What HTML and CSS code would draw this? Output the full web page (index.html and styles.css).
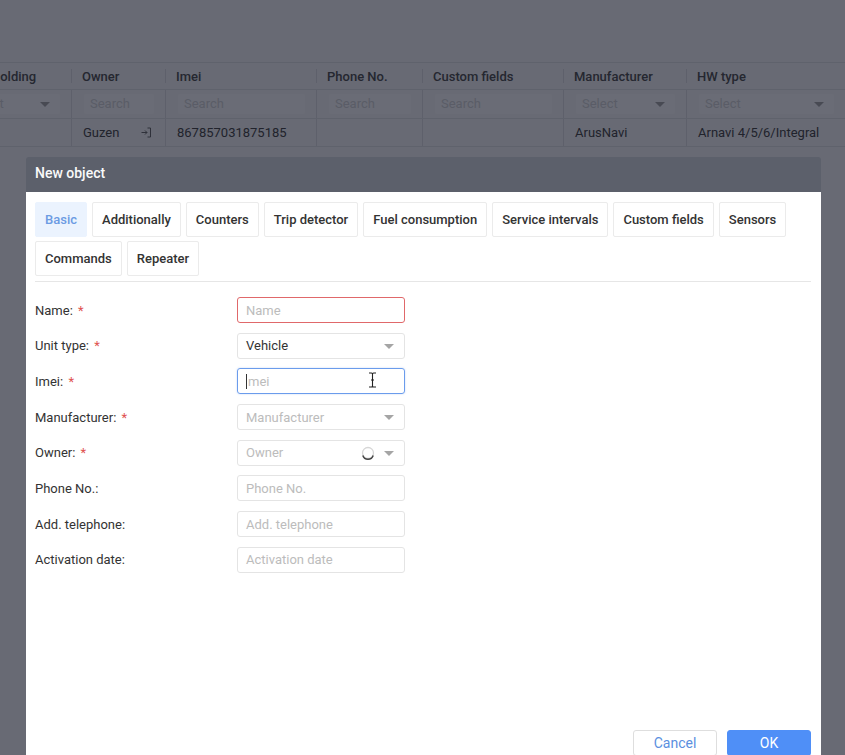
FILE: index.html
```html
<!DOCTYPE html>
<html lang="en">
<head>
  <meta charset="UTF-8" />
  <title>New object</title>
  <link rel="stylesheet" href="styles.css">
</head>
<body>

  <!-- table under the dialog -->
  <div class="page">
    <div class="toolbar"></div>
    <div class="grid">
      <div class="grid-row grid-head">
        <div class="cell">Holding</div>
        <div class="cell">Owner</div>
        <div class="cell">Imei</div>
        <div class="cell">Phone No.</div>
        <div class="cell">Custom fields</div>
        <div class="cell">Manufacturer</div>
        <div class="cell">HW type</div>
      </div>
      <div class="grid-row grid-filter">
        <div class="cell"><div class="filter filter-first">Select<span class="caret"></span></div></div>
        <div class="cell"><div class="filter">Search</div></div>
        <div class="cell"><div class="filter">Search</div></div>
        <div class="cell"><div class="filter">Search</div></div>
        <div class="cell"><div class="filter">Search</div></div>
        <div class="cell"><div class="filter">Select<span class="caret"></span></div></div>
        <div class="cell"><div class="filter">Select<span class="caret"></span></div></div>
      </div>
      <div class="grid-row grid-data">
        <div class="cell"></div>
        <div class="cell owner-cell">Guzen
          <svg class="login-icon" width="10" height="11" viewBox="0 0 10 11">
            <path d="M0.5 5.5h5.5M4 3.5l2 2-2 2M6.5 1h3v9h-3" fill="none" stroke="#666" stroke-width="1"/>
          </svg>
        </div>
        <div class="cell">867857031875185</div>
        <div class="cell"></div>
        <div class="cell"></div>
        <div class="cell">ArusNavi</div>
        <div class="cell">Arnavi 4/5/6/Integral</div>
      </div>
    </div>
  </div>

  <div class="overlay"></div>

  <!-- dialog -->
  <div class="modal">
    <div class="modal-head">New object</div>
    <div class="modal-body">
      <div class="tabs">
        <div class="tab active">Basic</div>
        <div class="tab">Additionally</div>
        <div class="tab">Counters</div>
        <div class="tab">Trip detector</div>
        <div class="tab">Fuel consumption</div>
        <div class="tab">Service intervals</div>
        <div class="tab">Custom fields</div>
        <div class="tab">Sensors</div>
        <div class="tab">Commands</div>
        <div class="tab">Repeater</div>
      </div>

      <div class="form">
        <div class="form-row">
          <label>Name: <span class="req">*</span></label>
          <div class="field invalid"><span class="ph">Name</span></div>
        </div>
        <div class="form-row">
          <label>Unit type: <span class="req">*</span></label>
          <div class="field"><span class="val">Vehicle</span><span class="caret"></span></div>
        </div>
        <div class="form-row">
          <label>Imei: <span class="req">*</span></label>
          <div class="field focused"><span class="text-cursor"></span><span class="ph">mei</span>
            <svg class="ibeam" width="9" height="16" viewBox="0 0 9 16">
              <path d="M1 1h2.5c0.6 0 1 0.4 1 1v12c0 0.6 0.4 1 1 1H8M8 1H5.5c-0.6 0-1 0.4-1 1M4.5 14c0 0.6-0.4 1-1 1H1M3 8h3" fill="none" stroke="#222" stroke-width="1.1"/>
            </svg>
          </div>
        </div>
        <div class="form-row">
          <label>Manufacturer: <span class="req">*</span></label>
          <div class="field"><span class="ph">Manufacturer</span><span class="caret"></span></div>
        </div>
        <div class="form-row">
          <label>Owner: <span class="req">*</span></label>
          <div class="field"><span class="ph">Owner</span>
            <svg class="spinner" width="14" height="14" viewBox="0 0 14 14">
              <circle cx="7" cy="7" r="5.5" fill="none" stroke="#d6d6d6" stroke-width="1.3"/>
              <path d="M1.8 9.5A5.5 5.5 0 0 0 12.2 9.5" fill="none" stroke="#444" stroke-width="1.5"/>
            </svg>
            <span class="caret"></span>
          </div>
        </div>
        <div class="form-row">
          <label>Phone No.:</label>
          <div class="field"><span class="ph">Phone No.</span></div>
        </div>
        <div class="form-row">
          <label>Add. telephone:</label>
          <div class="field"><span class="ph">Add. telephone</span></div>
        </div>
        <div class="form-row">
          <label>Activation date:</label>
          <div class="field"><span class="ph">Activation date</span></div>
        </div>
      </div>

      <div class="modal-foot">
        <button class="btn btn-cancel">Cancel</button>
        <button class="btn btn-ok">OK</button>
      </div>
    </div>
  </div>

</body>
</html>
```

FILE: styles.css
```css
body {
  margin: 0;
  font-family: Roboto, 'Liberation Sans', sans-serif;
  font-size: 13px;
  color: #333;
  background: #f4f5f7;
  overflow: hidden;
  height: 755px;
}

.toolbar {
  height: 62px;
}

/* table */
.grid {
  margin-left: -20px;
  border-top: 1px solid #dfe0e3;
}

.grid-row {
  display: grid;
  grid-template-columns: 91px 94px 151px 106px 141px 123px 1fr;
  border-bottom: 1px solid #dfe0e3;
}

.cell {
  position: relative;
  display: flex;
  align-items: center;
  padding: 0 11px;
  white-space: nowrap;
  overflow: hidden;
}

.grid-head {
  height: 26px;
}

.grid-head .cell {
  color: #4e4e4e;
  font-weight: 500;
}

.grid-head .cell + .cell::before {
  content: "";
  position: absolute;
  left: 0;
  top: 6px;
  bottom: 6px;
  border-left: 1px solid #dcdde0;
}

.grid-filter {
  height: 28px;
}

.grid-filter .cell {
  padding: 0 11px 0 12px;
  border-left: 1px solid #dcdde0;
}

.grid-filter .cell:first-child {
  border-left: none;
}

.filter {
  position: relative;
  flex: 1;
  height: 20px;
  line-height: 20px;
  padding: 0 6px;
  background: #fbfbfc;
  border-radius: 2px;
  color: #d2d3d6;
}

.filter-first {
  margin-left: -30px;
}

.grid-data {
  height: 27px;
}

.grid-data .cell {
  color: #444;
}

.grid-data .cell + .cell {
  border-left: 1px solid #dcdde0;
}

.owner-cell {
  justify-content: space-between;
  padding-right: 14px;
}

.caret {
  position: absolute;
  right: 10px;
  top: 50%;
  margin-top: -2px;
  border-left: 5px solid transparent;
  border-right: 5px solid transparent;
  border-top: 5px solid #a5a5a5;
}

.overlay {
  position: fixed;
  inset: 0;
  background: rgba(10, 14, 28, 0.6);
}

/* dialog */
.modal {
  position: absolute;
  left: 26px;
  top: 157px;
  width: 795px;
}

.modal-head {
  height: 35px;
  line-height: 33px;
  padding: 0 9px;
  background: #5c606b;
  border-radius: 3px 3px 0 0;
  color: #fafafa;
  font-size: 14px;
  font-weight: 500;
}

.modal-body {
  display: flex;
  flex-direction: column;
  height: 574px;
  padding: 10px 10px 10px 9px;
  background: #fff;
  box-sizing: border-box;
}

.tabs {
  display: flex;
  flex-wrap: wrap;
  gap: 4px 5px;
  padding-bottom: 5px;
  border-bottom: 1px solid #e6e6e6;
}

.tab {
  height: 35px;
  line-height: 33px;
  padding: 0 9px;
  border: 1px solid #ebebeb;
  border-radius: 2px;
  box-sizing: border-box;
  font-weight: 500;
  color: #333;
}

.tab.active {
  background: #ebf3fe;
  border-color: #ebf3fe;
  color: #6c9be3;
}

.form {
  flex: 1;
  display: flex;
  flex-direction: column;
  gap: 9.7px;
  padding-top: 15px;
}

.form-row {
  display: flex;
  align-items: center;
}

.form-row label {
  width: 202px;
  color: #333;
}

.req {
  color: #e0524f;
  margin-left: 2px;
}

.field {
  position: relative;
  display: flex;
  align-items: center;
  width: 168px;
  height: 26px;
  padding: 0 8px;
  border: 1px solid #e4e4e4;
  border-radius: 3px;
  box-sizing: border-box;
}

.field.invalid {
  border-color: #e0686a;
}

.field.focused {
  border-color: #6b9cec;
  box-shadow: 0 0 2px rgba(107, 156, 236, 0.4);
}

.ph {
  color: #bcbcbc;
}

.val {
  color: #333;
}

.text-cursor {
  width: 1px;
  height: 15px;
  background: #333;
  margin-right: 1px;
}

.ibeam {
  position: absolute;
  left: 130px;
  top: 3px;
}

.spinner {
  position: absolute;
  right: 29px;
  top: 5px;
}

.modal-foot {
  display: flex;
  justify-content: flex-end;
  gap: 10px;
}

.btn {
  width: 84px;
  height: 26px;
  font-family: Roboto, 'Liberation Sans', sans-serif;
  font-size: 14px;
  border-radius: 3px;
  cursor: pointer;
}

.btn-cancel {
  background: #fff;
  border: 1px solid #dedede;
  color: #5b8fe0;
}

.btn-ok {
  background: #4f8ff7;
  border: 1px solid #4f8ff7;
  color: #fff;
}
```
